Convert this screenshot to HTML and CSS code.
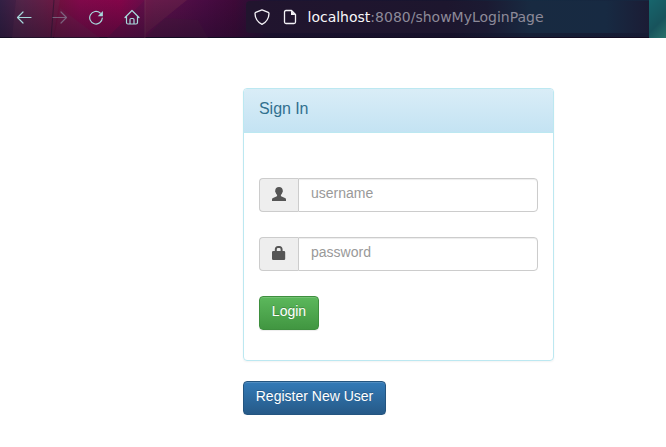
FILE: index.html
```html
<!DOCTYPE html>
<html lang="en">
<head>
<meta charset="utf-8">
<title>Sign In</title>
<link rel="stylesheet" href="styles.css">
</head>
<body>
<header class="toolbar">
  <svg class="backdrop" viewBox="0 0 666 38" preserveAspectRatio="none" aria-hidden="true">
    <defs>
      <linearGradient id="dusk" x2="0" y2="1"><stop stop-color="#150b22" stop-opacity="0"/><stop offset="1" stop-color="#150b22" stop-opacity=".4"/></linearGradient>
    </defs>
    <path d="M16 0h44l-7 38H12z" fill="#652f50" opacity=".3"/>
    <path d="M54 38L60 8l40 30z" fill="#6f2650" opacity=".35"/>
    <path d="M145 0v38h-38z" fill="#5a1048" opacity=".5"/>
    <path d="M145 0h42l-42 34z" fill="#6d2549" opacity=".5"/>
    <path d="M147 36l18-18 33 2 10 18z" fill="#4c1740" opacity=".5"/>
    <path d="M54 0l-3 38" stroke="#26152f" opacity=".6"/>
    <path d="M145 0v38" stroke="#7b3a58" opacity=".6"/>
    <path d="M0 0h666v38H0z" fill="url(#dusk)"/>
  </svg>
  <nav class="nav">
    <svg class="icon" viewBox="0 0 16 16"><path d="M15 8.500H1.500M7 3L1.500 8.500 7 14"/></svg>
    <svg class="icon disabled" viewBox="0 0 16 16"><path d="M1 8.500h13.500M9 3L14.500 8.500 9 14"/></svg>
    <svg class="icon" viewBox="0 0 16 16"><path d="M12.200 4A6.300 6.300 0 1 0 14.300 9"/><path class="solid" d="M14.900 2v5.200H9.700z"/></svg>
    <svg class="icon" viewBox="0 0 16 16"><path d="M1 8.500L8 1.500l7 7M2.500 7.500v6q0 1.500 1.500 1.500h8q1.500 0 1.500-1.500v-6M6 15v-4.500q0-1 1-1h2q1 0 1 1V15"/></svg>
  </nav>
  <div class="address">
    <svg class="icon" viewBox="0 0 16 16"><path d="M8 .8l6.300 2.500q.7.300.7 1.200-.2 7.500-7 10.800Q1.200 12 1 4.500q0-.9.700-1.200z"/></svg>
    <svg class="icon page" viewBox="0 0 16 16"><path d="M9.500 1.500H4Q2.500 1.500 2.500 3v10q0 1.500 1.500 1.500h8q1.500 0 1.500-1.500V5.500z"/><path class="solid" d="M9 1.500l4.500 4.500H9z"/></svg>
    <span class="url"><b>localhost</b>:8080/showMyLoginPage</span>
  </div>
  <div class="toolbar-end"></div>
</header>
<main class="container">
  <section class="panel">
    <div class="panel-heading">Sign In</div>
    <form class="panel-body">
      <div class="input-group">
        <span class="addon"><svg viewBox="0 0 14 14"><path d="M7 0C4.500 0 3.300 1.300 3.300 3.300c-.4 1 0 2 .5 2.400.2 1 .6 1.600 1.200 2 .3.900.1 1.500-.6 1.800L1 11c-.7.300-1 .8-1 1.500V14h14v-1.500c0-.7-.3-1.200-1-1.500L9.600 9.500c-.7-.3-.9-.9-.6-1.800.6-.4 1-1 1.200-2 .5-.4.9-1.400.5-2.400C10.700 1.300 9.500 0 7 0z"/></svg></span>
        <input type="text" placeholder="username">
      </div>
      <div class="input-group">
        <span class="addon"><svg viewBox="0 0 14 14"><path fill-rule="evenodd" d="M2.800 5V3.500C2.800 1.300 4.100 0 6 0h1.400c1.900 0 3.200 1.300 3.200 3.500V5h1.400q1.200 0 1.200 1.200v6.600q0 1.200-1.200 1.200H1.200Q0 14 0 12.800V6.200Q0 5 1.200 5zM4.800 5h3.800V3.200Q8.600 2 7.400 2H6Q4.800 2 4.800 3.200z"/></svg></span>
        <input type="password" placeholder="password">
      </div>
      <button type="button" class="btn success">Login</button>
    </form>
  </section>
  <button type="button" class="btn primary">Register New User</button>
</main>
</body>
</html>
```
FILE: styles.css
```css
* { box-sizing: border-box; }

body {
  margin: 0;
  background: #fff;
  font: 14px/20px "Liberation Sans", Arial, sans-serif;
  overflow: hidden;
}

.toolbar {
  position: relative;
  display: flex;
  height: 38px;
  background: linear-gradient(90deg, #322044 0, #4c2046 22px, #70103f 58px, #80094a 80px, #830549 120px, #5d104a 155px, #480b42 205px, #3e0938 235px, #1c1432 270px, #17152e 450px, #152b42 530px, #17253e 640px);
  box-shadow: inset 0 -1px #100d20;
}

.backdrop {
  position: absolute;
  width: 100%;
  height: 100%;
}

.nav {
  position: relative;
  display: flex;
  gap: 20px;
  width: 246px;
  padding: 9px 0 0 16px;
}

.icon {
  width: 16px;
  height: 16px;
  flex: none;
  fill: none;
  stroke: #a7d8dc;
  stroke-width: 1.2;
  stroke-linecap: round;
  stroke-linejoin: round;
}

.icon .solid { fill: #a7d8dc; stroke: none; }
.disabled { opacity: .4; }

.address {
  position: relative;
  display: flex;
  width: 403px;
  height: 32px;
  margin-top: 1px;
  padding: 8px 0 0 8px;
  border-radius: 4px 0 0 4px;
  background: linear-gradient(90deg, #21142e 0, #1d162e 200px, #1b1a32 240px, #182a41 285px, #172a42 360px, #1b1c35 403px);
}

.address .icon { stroke: #f4f2f7; stroke-width: 1.3; }
.address .page { margin-left: 12px; }
.address .page .solid { fill: #f4f2f7; }

.url {
  margin: -2px 0 0 9.500px;
  color: #8d8a99;
  font: 14px/20px "DejaVu Sans", sans-serif;
  white-space: nowrap;
}

.url b { color: #f8f7fa; font-weight: normal; }

.toolbar-end {
  position: relative;
  flex: 1;
  background: linear-gradient(135deg, #17656c, #17535c 60%, #2a716b);
}

.container {
  width: 311px;
  margin: 50px 0 0 243px;
}

.panel {
  height: 273px;
  margin-bottom: 20px;
  border: 1px solid #bce8f1;
  border-radius: 4px;
  box-shadow: 0 1px 2px rgba(0, 0, 0, .05);
}

.panel-heading {
  height: 44px;
  padding: 10px 15px;
  border-bottom: 1px solid #bce8f1;
  border-radius: 3px 3px 0 0;
  background: linear-gradient(#d9edf7, #c4e3f3);
  color: #31708f;
  font-size: 16px;
  letter-spacing: -.05px;
}

.panel-body { padding: 45px 15px 0; }

.input-group {
  display: flex;
  height: 34px;
  margin-bottom: 25px;
}

.addon {
  width: 39px;
  padding: 8px 0 0 12px;
  border: 1px solid #ccc;
  border-right: 0;
  border-radius: 4px 0 0 4px;
  background: #eee;
  line-height: 0;
}

.addon svg { width: 14px; height: 14px; fill: #555; }

input {
  flex: 1;
  min-width: 0;
  padding: 4px 12px 8px;
  border: 1px solid #ccc;
  border-radius: 0 4px 4px 0;
  background: #fff;
  box-shadow: inset 0 1px 1px rgba(0, 0, 0, .075);
  font: inherit;
}

input::placeholder { color: #999; opacity: 1; }

.btn {
  display: block;
  height: 34px;
  padding: 4px 0 8px;
  border: 1px solid;
  border-radius: 4px;
  box-shadow: inset 0 1px rgba(255, 255, 255, .15), 0 1px 1px rgba(0, 0, 0, .075);
  color: #fff;
  font: inherit;
  text-shadow: 0 -1px rgba(0, 0, 0, .2);
}

.success {
  width: 60px;
  border-color: #3e8f3e;
  background: linear-gradient(#5cb85c, #419641);
}

.primary {
  width: 143px;
  border-color: #245580;
  background: linear-gradient(#337ab7, #265a88);
}
```
